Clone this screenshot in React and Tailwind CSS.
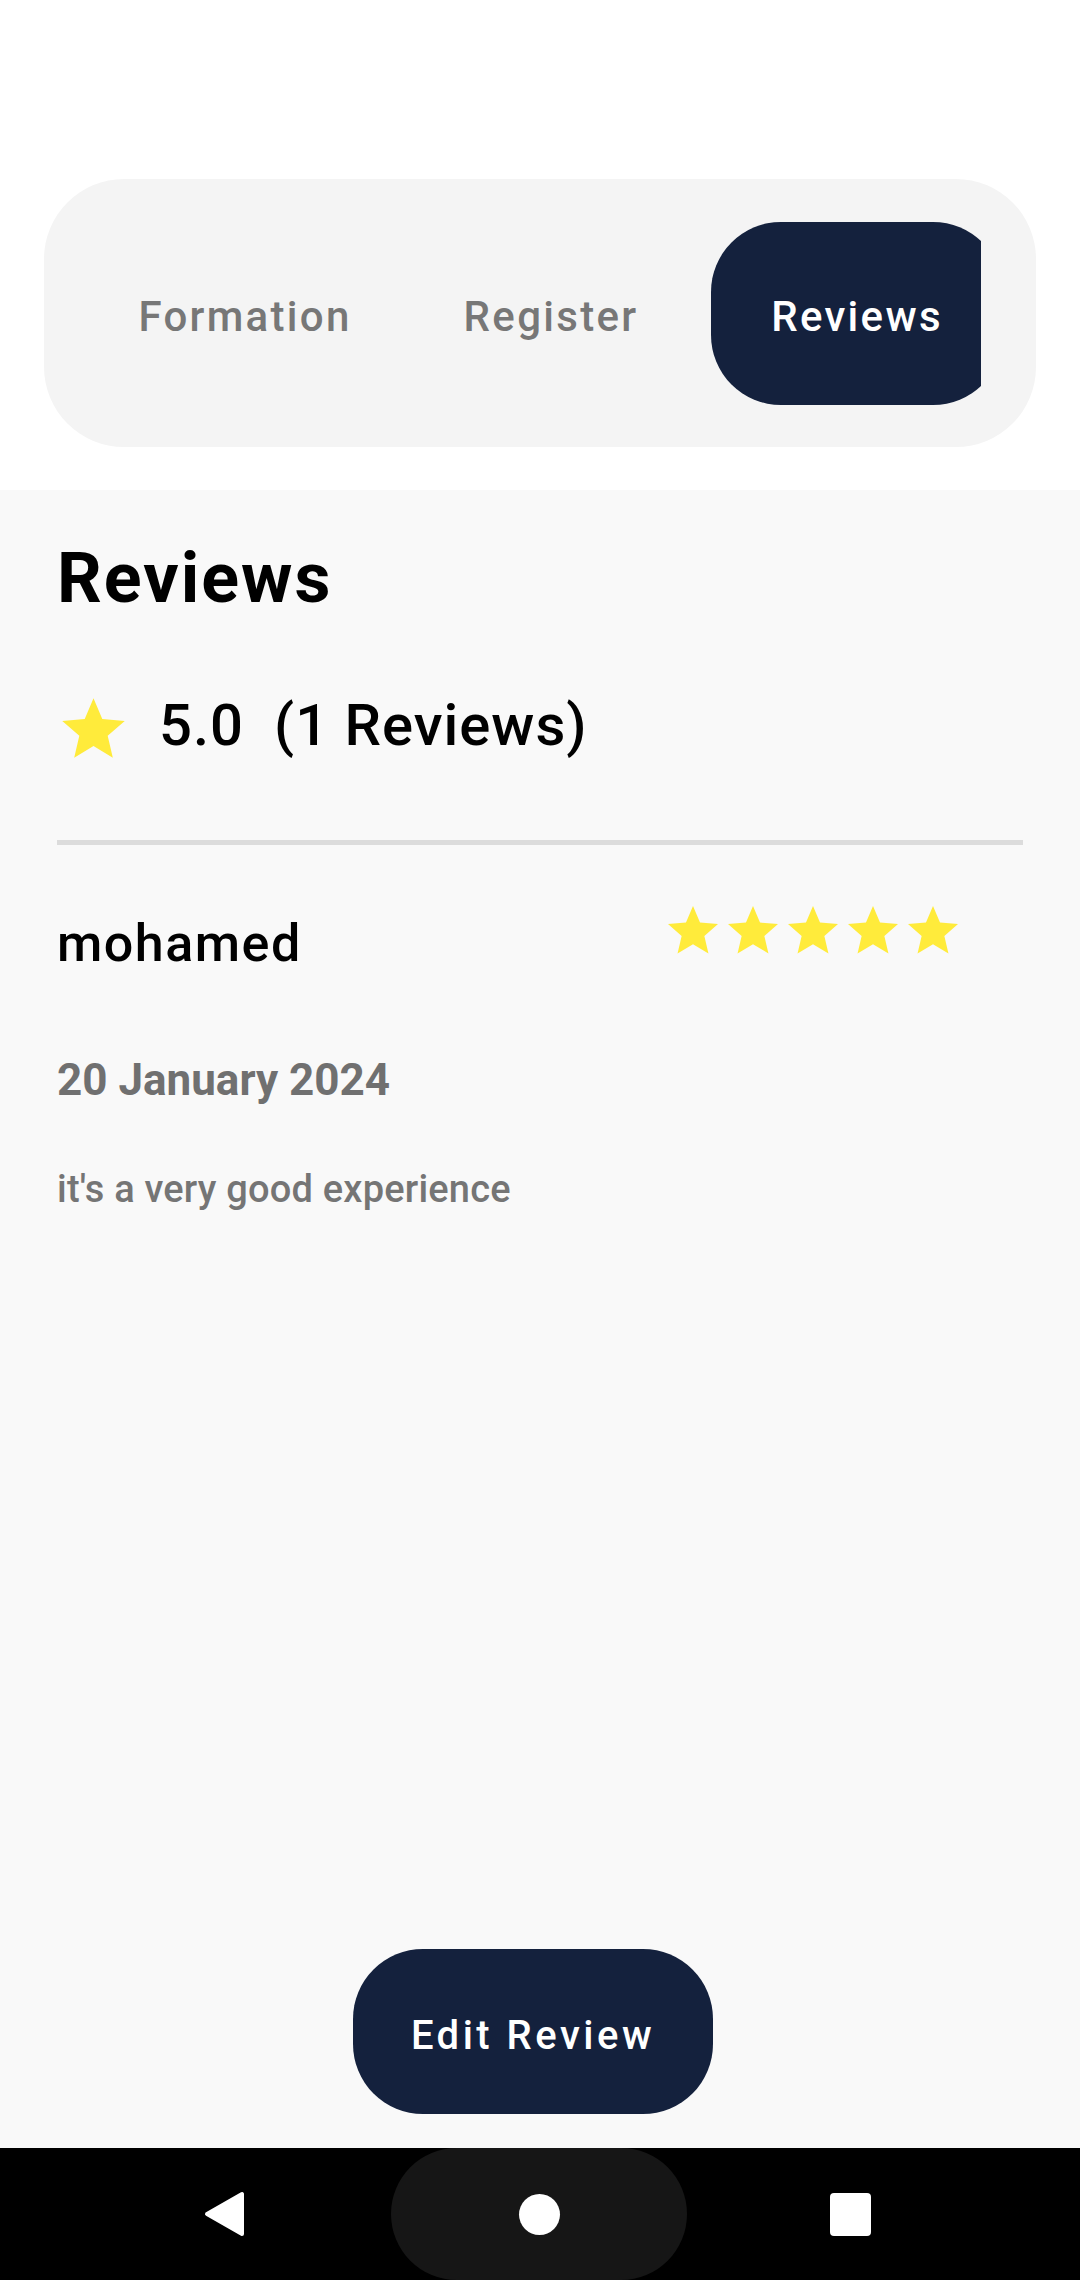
const tabs = ["Formation", "Register", "Reviews"];

function Star({ className }) {
  return (
    <svg viewBox="0 0 24 24" className={className} fill="#ffeb3b">
      <path d="M12 17.27L18.18 21l-1.64-7.03L22 9.24l-7.19-.61L12 2 9.19 8.63 2 9.24l5.46 4.73L5.82 21z" />
    </svg>
  );
}

export default function App() {
  return (
    <div className="flex h-[2280px] w-[1080px] flex-col bg-white font-['Roboto','Noto_Sans',sans-serif]">
      <div className="mx-[44px] mt-[179px] flex h-[268px] items-center rounded-[80px] bg-[#f4f4f4] px-[55px]">
        <div className="flex min-w-0 flex-1 gap-[14px] overflow-hidden">
          {tabs.map((tab) => {
            const active = tab === "Reviews";
            return (
              <div
                key={tab}
                className={`flex h-[183px] w-[292px] shrink-0 items-center justify-center rounded-[70px] pt-[6px] text-[42px] font-medium tracking-[2.3px] ${
                  active ? "bg-[#14213d] text-white" : "text-[#777777]"
                }`}
              >
                {tab}
              </div>
            );
          })}
        </div>
      </div>

      <main className="mt-[43px] flex flex-1 flex-col bg-[#f9f9f9] px-[57px]">
        <h1 className="mt-[53px] text-[70px] font-bold leading-none tracking-[2px] text-black">
          Reviews
        </h1>

        <div className="mt-[79px] flex items-start">
          <Star className="h-[75px] w-[75px] -ml-px" />
          <div className="mt-[4px] ml-[28px] flex gap-[30px] text-[58px] font-medium leading-none tracking-[1px] text-black">
            <span>5.0</span>
            <span>(1 Reviews)</span>
          </div>
        </div>

        <div className="mt-[73px] h-[5px] w-full bg-[#dcdcdc]" />

        <div className="mt-[56px] flex items-start">
          <span className="mt-[17px] text-[52px] font-medium leading-none tracking-[1.5px] text-black">
            mohamed
          </span>
          <div className="ml-auto mr-[60px] flex">
            {[0, 1, 2, 3, 4].map((i) => (
              <Star key={i} className="h-[60px] w-[60px]" />
            ))}
          </div>
        </div>

        <p className="mt-[88px] text-[44px] font-bold leading-none text-[#707070]">
          20 January 2024
        </p>

        <p className="mt-[68px] text-[38px] font-medium leading-none tracking-[0.2px] text-[#757575]">
          it's a very good experience
        </p>

        <button className="mt-auto mb-[34px] ml-[296px] flex h-[165px] w-[360px] items-center justify-center rounded-[70px] bg-[#14213d] pt-[8px] text-[40px] font-medium tracking-[3.5px] text-white">
          Edit Review
        </button>
      </main>

      <nav className="flex h-[132px] items-center bg-black">
        <div className="flex w-[391px] justify-end pr-[147px]">
          <svg viewBox="0 0 40 46" className="h-[46px] w-[40px]">
            <polygon
              points="3,23 38,3 38,43"
              fill="white"
              stroke="white"
              strokeWidth="4"
              strokeLinejoin="round"
            />
          </svg>
        </div>
        <div className="flex h-full w-[296px] items-center justify-center rounded-full bg-[#161616]">
          <div className="h-[41px] w-[41px] rounded-full bg-white" />
        </div>
        <div className="pl-[143px]">
          <div className="h-[43px] w-[41px] rounded-[4px] bg-white" />
        </div>
      </nav>
    </div>
  );
}
